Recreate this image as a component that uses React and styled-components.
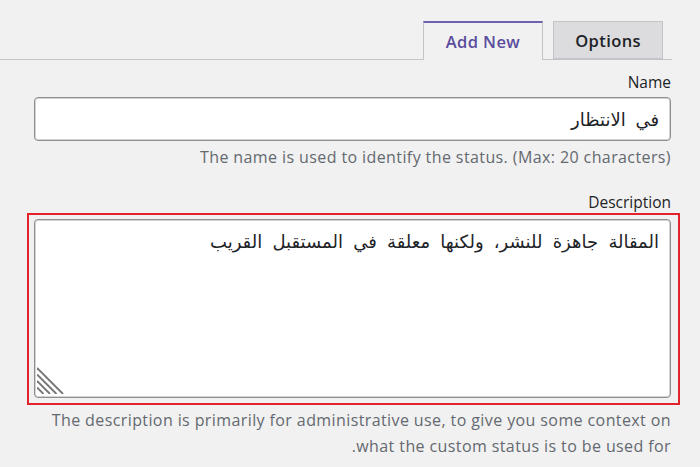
import React from 'react'
import styled, { createGlobalStyle } from 'styled-components'

const GlobalStyle = createGlobalStyle`
  html, body {
    margin: 0;
    padding: 0;
    background: #f1f1f1;
  }
  body {
    direction: rtl;
    font-family: "Open Sans", "DejaVu Sans", sans-serif;
    color: #23282d;
  }
`

const Page = styled.div`
  width: 700px;
  height: 467px;
  box-sizing: border-box;
  padding: 21px 28px 0 0;
  overflow: hidden;
`

const TabBar = styled.nav`
  display: flex;
  gap: 10px;
  padding-right: 9px;
  border-bottom: 1px solid #c3c4c7;
  height: 38px;
`

const Tab = styled.div`
  box-sizing: border-box;
  height: ${({ active }) => (active ? '39px' : '38px')};
  padding: 0 ${({ active }) => (active ? '22px' : '21px')};
  display: flex;
  align-items: center;
  font-size: 16.5px;
  font-weight: 600;
  letter-spacing: 0.4px;
  border: 1px solid #c3c4c7;
  border-bottom: ${({ active }) => (active ? 'none' : '1px solid #c3c4c7')};
  border-top: ${({ active }) => (active ? '2px solid #6e62ae' : '1px solid #c3c4c7')};
  background: ${({ active }) => (active ? '#f1f1f1' : '#dcdcde')};
  color: ${({ active }) => (active ? '#5a4c9c' : '#1d2327')};
  direction: ltr;
`

const Form = styled.div`
  padding: 12px 1px 0 34px;
`

const Label = styled.div`
  font-size: 15.5px;
  line-height: 20px;
  text-align: right;
  direction: ltr;
  color: #1d2327;
`

const TextInput = styled.div`
  box-sizing: border-box;
  height: 44px;
  margin-top: 5px;
  padding: 0 11px;
  display: flex;
  align-items: center;
  background: #fff;
  border: 1px solid #8c8f94;
  border-radius: 4px;
  box-shadow: inset 0 0 0 1px #d4d4d4;
  font-family: "DejaVu Sans", sans-serif;
  font-size: 18px;
  word-spacing: 4px;
  color: #1d2327;
`

const Hint = styled.p`
  margin: ${({ top }) => top}px 0 0;
  font-size: 16px;
  letter-spacing: 0.4px;
  line-height: ${({ lh }) => lh || 20}px;
  color: #646970;
  text-align: right;
  direction: ${({ dir }) => dir || 'ltr'};
`

const Highlight = styled.div`
  position: relative;
  margin: 1px -9px 0 -7px;
  padding: 4px 7px 5px 5px;
  border: 2px solid #e3222c;
`

const TextArea = styled.div`
  box-sizing: border-box;
  height: 179px;
  padding: 10px 11px;
  background: #fff;
  border: 1px solid #8c8f94;
  border-radius: 4px;
  box-shadow: inset 0 0 0 1px #d4d4d4;
  font-family: "DejaVu Sans", sans-serif;
  font-size: 18px;
  word-spacing: 4.5px;
  line-height: 24px;
  color: #1d2327;
`

const Grip = styled.svg`
  position: absolute;
  left: 8px;
  bottom: 9px;
`

const Spacer = styled.div`
  height: ${({ h }) => h}px;
`

export default function App() {
  return (
    <>
      <GlobalStyle />
      <Page>
        <TabBar>
          <Tab>Options</Tab>
          <Tab active>Add New</Tab>
        </TabBar>
        <Form>
          <Label>Name</Label>
          <TextInput>في الانتظار</TextInput>
          <Hint top={6}>The name is used to identify the status. (Max: 20 characters)</Hint>
          <Spacer h={25} />
          <Label>Description</Label>
          <Highlight>
            <TextArea>المقالة جاهزة للنشر، ولكنها معلقة في المستقبل القريب</TextArea>
            <Grip width="27" height="27" viewBox="0 0 27 27">
              <g stroke="#767676" strokeWidth="1.9">
                <line x1="0" y1="1" x2="26" y2="27" />
                <line x1="0" y1="7.5" x2="19.5" y2="27" />
                <line x1="0" y1="14" x2="13" y2="27" />
                <line x1="0" y1="20.5" x2="6.5" y2="27" />
              </g>
            </Grip>
          </Highlight>
          <Hint top={2} lh={26} dir="rtl">
            The description is primarily for administrative use, to give you some context on what the custom status is to be used for.
          </Hint>
        </Form>
      </Page>
    </>
  )
}
